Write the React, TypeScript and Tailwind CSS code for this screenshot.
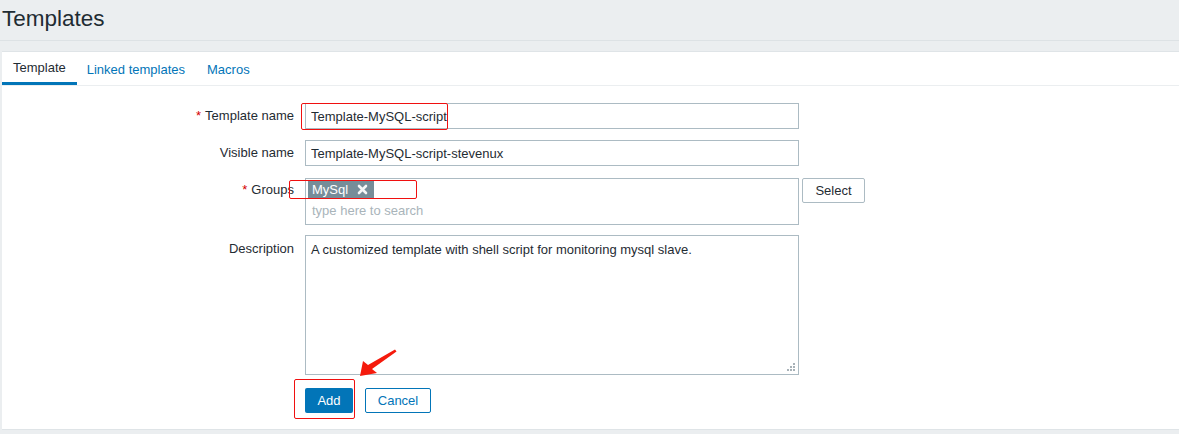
import React from "react";

const font = "font-['Liberation_Sans',Arial,sans-serif]";

function FormRow({
  label,
  required,
  children,
  labelClass = "h-[26px]",
}: {
  label: string;
  required?: boolean;
  children: React.ReactNode;
  labelClass?: string;
}) {
  return (
    <div className="flex items-start">
      <div className={`w-[292px] flex items-center justify-end text-[13px] text-[#1f2c33] ${labelClass}`}>
        {required && <span className="text-[#d40000] mr-[4px]">*</span>}
        {label}
      </div>
      <div className="ml-[11px] flex items-start gap-[3px]">{children}</div>
    </div>
  );
}

function TextBox({ value }: { value: string }) {
  return (
    <input
      readOnly
      value={value}
      className="w-[494px] h-[26px] border border-[#acbbc3] bg-white px-[5px] text-[13px] text-[#1f2c33] outline-none"
    />
  );
}

export default function App() {
  return (
    <div className={`relative w-[1179px] h-[434px] bg-[#ebeef0] overflow-hidden ${font}`}>
      <header className="h-[41px] border-b border-[#dde2e5] pl-[2px] flex items-center">
        <h1 className="text-[22.5px] leading-none text-[#1f2c33] -mt-[1px]">Templates</h1>
      </header>

      <section className="mt-[10px] ml-[2px] h-[379px] bg-white border-t border-b border-[#dfe4e7]">
        <nav className="flex h-[34px] border-b border-[#ebeef0] text-[13px]">
          <div className="px-[11px] flex items-center border-b-[3px] border-[#0275b8] text-[#1f2c33] pt-[2px]">
            Template
          </div>
          <div className="pl-[10px] pr-[11px] flex items-center text-[#0275b8] pt-[2px]">Linked templates</div>
          <div className="pl-[11px] pr-[10px] flex items-center text-[#0275b8] pt-[2px]">Macros</div>
        </nav>

        <div className="pt-[17px] flex flex-col gap-[11px]">
          <FormRow label="Template name" required>
            <TextBox value="Template-MySQL-script" />
          </FormRow>
          <FormRow label="Visible name">
            <TextBox value="Template-MySQL-script-stevenux" />
          </FormRow>
          <div className="mt-[1px]">
            <FormRow label="Groups" required labelClass="h-[23px]">
              <div className="w-[494px] h-[47px] border border-[#acbbc3] bg-white px-[2px] pt-[2px] flex flex-col items-start text-[13px] leading-[15px]">
                <span className="flex items-center h-[17px] bg-[#768d99] text-white pl-[4px] pr-[6px]">
                  MySql
                  <svg width="11" height="11" viewBox="0 0 11 11" className="ml-[9px]">
                    <path d="M2 2 L9 9 M9 2 L2 9" stroke="#f4f6f7" strokeWidth="2.6" strokeLinecap="round" />
                  </svg>
                </span>
                <div className="pl-[4px] mt-[5px] text-[#a9b4ba]">type here to search</div>
              </div>
              <button className="h-[25px] w-[63px] border border-[#acbbc3] rounded-[2px] bg-white text-[13px] text-[#1f2c33]">
                Select
              </button>
            </FormRow>
          </div>
          <div className="-mt-[1px]">
            <FormRow label="Description" labelClass="h-[27px]">
              <div className="relative">
                <textarea
                  readOnly
                  value="A customized template with shell script for monitoring mysql slave."
                  className="block w-[494px] h-[140px] border border-[#acbbc3] bg-white px-[5px] pt-[4px] text-[13px] text-[#1f2c33] resize-none outline-none"
                />
                <svg width="9" height="9" viewBox="0 0 9 9" className="absolute right-[3px] bottom-[3px]">
                  <g fill="#a8b2b8">
                    <rect x="6" y="0" width="2" height="2" />
                    <rect x="3" y="3" width="2" height="2" />
                    <rect x="6" y="3" width="2" height="2" />
                    <rect x="0" y="6" width="2" height="2" />
                    <rect x="3" y="6" width="2" height="2" />
                    <rect x="6" y="6" width="2" height="2" />
                  </g>
                </svg>
              </div>
            </FormRow>
          </div>
          <div className="mt-[2px] ml-[303px] flex gap-[12px]">
            <button className="h-[25px] w-[48px] rounded-[2px] bg-[#0275b8] text-white text-[13px]">Add</button>
            <button className="h-[25px] w-[66px] rounded-[2px] border border-[#0275b8] bg-white text-[#0275b8] text-[13px]">
              Cancel
            </button>
          </div>
        </div>
      </section>

      {/* red annotation marks */}
      <div className="absolute left-[301px] top-[103px] w-[147px] h-[27px] border border-[#f01010] rounded-[2px]" />
      <div className="absolute left-[289px] top-[180px] w-[128px] h-[19px] border border-[#f01010] rounded-[2px]" />
      <div className="absolute left-[294px] top-[379px] w-[61px] h-[40px] border border-[#f01010] rounded-[2px]" />
      <svg className="absolute left-0 top-0" width="1179" height="434" viewBox="0 0 1179 434">
        <polygon
          points="360,376 363,361 368,365 395,349.5 396.5,351.5 372,369 377,373"
          fill="#f51a0c"
        />
      </svg>
    </div>
  );
}
